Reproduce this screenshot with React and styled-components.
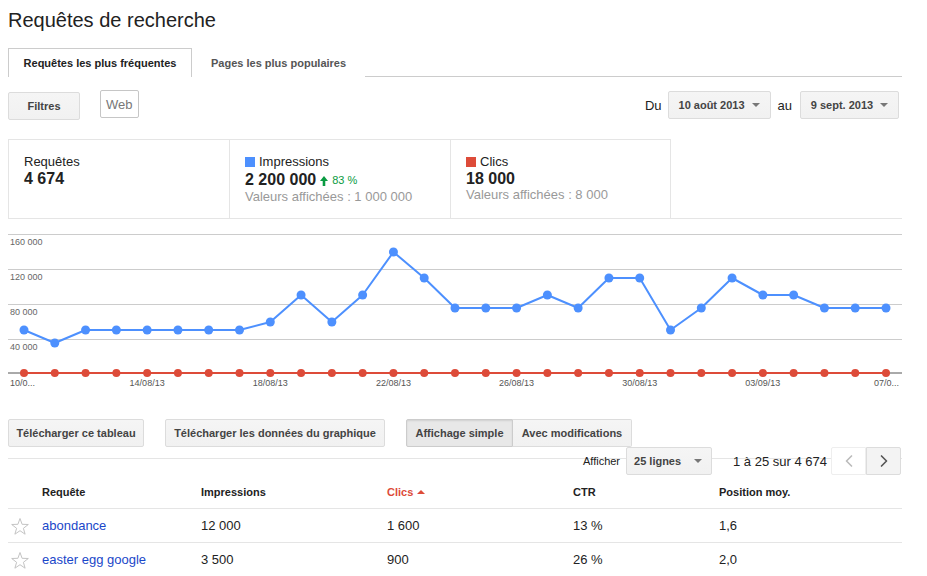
import React from "react";
import styled, { createGlobalStyle } from "styled-components";
import { ChevronLeft, ChevronRight } from "lucide-react";

const GlobalStyle = createGlobalStyle`
  body {
    margin: 0;
    background: #fff;
    font-family: "Liberation Sans", Arial, sans-serif;
    color: #222;
  }
`;

const BLUE = "#4d90fe";
const RED = "#dd4b39";

const blueYs = [
  329, 342, 329, 329, 329, 329, 329, 329, 321, 294, 321, 294, 251, 277, 307,
  307, 307, 294, 307, 277, 277, 329, 307, 277, 294, 294, 307, 307, 307,
];

const xLabels = [
  { i: 4, text: "14/08/13" },
  { i: 8, text: "18/08/13" },
  { i: 12, text: "22/08/13" },
  { i: 16, text: "26/08/13" },
  { i: 20, text: "30/08/13" },
  { i: 24, text: "03/09/13" },
];

const rows = [
  { q: "abondance", imp: "12 000", clics: "1 600", ctr: "13 %", pos: "1,6" },
  { q: "easter egg google", imp: "3 500", clics: "900", ctr: "26 %", pos: "2,0" },
];

const Page = styled.div`
  width: 894px;
  padding: 0 8px;
`;

const Title = styled.h1`
  margin: 8px 0 0;
  font-size: 20px;
  line-height: 24px;
  font-weight: normal;
  color: #222;
`;

const Tabs = styled.div`
  display: flex;
  margin-top: 16px;
  border-bottom: 1px solid #ccc;
  height: 28px;
`;

const Tab = styled.div`
  display: flex;
  align-items: center;
  justify-content: center;
  white-space: nowrap;
  padding: 0 ${(p) => (p.$active ? "0" : "18px")};
  width: ${(p) => (p.$active ? "184px" : "auto")};
  box-sizing: border-box;
  font-size: 11px;
  font-weight: bold;
  color: ${(p) => (p.$active ? "#222" : "#555")};
  background: #fff;
  border: 1px solid ${(p) => (p.$active ? "#ccc" : "transparent")};
  border-bottom: none;
  margin-bottom: -1px;
  height: 29px;
`;

const FilterRow = styled.div`
  display: flex;
  align-items: center;
  margin-top: 13px;
  height: 30px;
`;

const Button = styled.div`
  display: inline-flex;
  align-items: center;
  justify-content: center;
  height: 28px;
  box-sizing: border-box;
  padding: 0 ${(p) => p.$pad || "8px"};
  width: ${(p) => p.$w || "auto"};
  background: ${(p) => (p.$pressed ? "#e8e8e8" : "linear-gradient(#f5f5f5, #f1f1f1)")};
  border: 1px solid ${(p) => (p.$pressed ? "#ccc" : "#dcdcdc")};
  border-radius: 2px;
  box-shadow: ${(p) => (p.$pressed ? "inset 0 1px 2px rgba(0,0,0,0.1)" : "none")};
  font-size: 11px;
  font-weight: bold;
  color: #444;
  white-space: nowrap;
`;

const WebChip = styled.div`
  display: inline-flex;
  align-items: center;
  height: 28px;
  box-sizing: border-box;
  margin-left: 20px;
  margin-top: -2px;
  padding: 0 5px;
  border: 1px solid #c6c6c6;
  border-radius: 2px;
  font-size: 13px;
  color: #777;
`;

const Spacer = styled.div`
  flex: 1;
`;

const Label = styled.span`
  font-size: ${(p) => p.$size || "13px"};
  color: #222;
  margin: 0 ${(p) => p.$mr || "6px"} 0 ${(p) => p.$ml || "0"};
`;

const Caret = styled.span`
  display: inline-block;
  width: 0;
  height: 0;
  border-left: 4px solid transparent;
  border-right: 4px solid transparent;
  border-top: 4px solid #777;
  margin-left: ${(p) => p.$ml || "7px"};
`;

const Stats = styled.div`
  display: flex;
  margin-top: 19px;
  border-bottom: 1px solid #e5e5e5;
`;

const StatCell = styled.div`
  width: ${(p) => p.$w};
  box-sizing: border-box;
  height: 79px;
  padding: 14px 0 0 ${(p) => p.$pl || "15px"};
  border-top: 1px solid #e5e5e5;
  border-right: 1px solid #e5e5e5;
  border-left: ${(p) => (p.$first ? "1px solid #e5e5e5" : "none")};
`;

const StatName = styled.div`
  display: flex;
  align-items: center;
  font-size: 13px;
  line-height: 16px;
  color: #222;
`;

const Swatch = styled.span`
  width: 10px;
  height: 10px;
  background: ${(p) => p.$color};
  margin-right: 4px;
`;

const StatValue = styled.div`
  display: flex;
  align-items: center;
  font-size: 16px;
  line-height: 17px;
  font-weight: bold;
  color: #222;
`;

const Delta = styled.span`
  display: inline-flex;
  align-items: center;
  font-size: 11px;
  font-weight: normal;
  color: #0a9b42;
  margin-left: 4px;
  margin-top: 2px;
  gap: 4px;
`;

const StatSub = styled.div`
  font-size: 13px;
  line-height: 16px;
  color: #999;
`;

const ChartSvg = styled.svg`
  display: block;
  margin-top: 7px;
  font-family: "Liberation Sans", Arial, sans-serif;
`;

const Toolbar = styled.div`
  display: flex;
  align-items: center;
  gap: 21px;
  margin-top: 21px;
  padding-bottom: 11px;
  border-bottom: 1px solid #e5e5e5;
`;

const Segmented = styled.div`
  display: flex;
  & > div:first-child {
    border-radius: 2px 0 0 2px;
  }
  & > div:last-child {
    border-radius: 0 2px 2px 0;
    border-left: none;
  }
`;

const Pager = styled.div`
  display: flex;
  align-items: center;
  justify-content: flex-end;
  margin-top: -12px;
  height: 28px;
`;

const Select = styled(Button)`
  justify-content: space-between;
  width: 86px;
  padding: 0 9px 0 7px;
  margin-right: 21px;
`;

const PageInfo = styled.span`
  font-size: 13px;
  color: #222;
  margin-right: 4px;
`;

const NavButton = styled.div`
  display: flex;
  align-items: center;
  justify-content: center;
  width: 35px;
  height: 28px;
  box-sizing: border-box;
  border: 1px solid ${(p) => (p.$disabled ? "#eee" : "#dcdcdc")};
  background: ${(p) => (p.$disabled ? "#fff" : "#f3f3f3")};
  color: ${(p) => (p.$disabled ? "#bbb" : "#555")};
  border-radius: ${(p) => (p.$disabled ? "2px 0 0 2px" : "0 2px 2px 0")};
`;

const TableRow = styled.div`
  display: grid;
  grid-template-columns: 34px 159px 186px 186px 146px 1fr;
  align-items: center;
  height: 33px;
  border-bottom: 1px solid #e5e5e5;
`;

const HeadCell = styled.div`
  font-size: 11px;
  font-weight: bold;
  color: ${(p) => (p.$sorted ? RED : "#222")};
  display: flex;
  align-items: center;
  gap: 4px;
`;

const Cell = styled.div`
  font-size: 13px;
  color: #222;
`;

const QueryLink = styled.a`
  font-size: 13px;
  color: #1a47c9;
  text-decoration: none;
`;

const SortUp = styled.span`
  width: 0;
  height: 0;
  border-left: 4px solid transparent;
  border-right: 4px solid transparent;
  border-bottom: 4px solid ${RED};
`;

const Star = () => (
  <svg width="34" height="20" viewBox="0 0 34 20">
    <polygon
      points="12,2.5 14.1,8.3 20.3,8.5 15.4,12.3 17.1,18.2 12,14.7 6.9,18.2 8.6,12.3 3.7,8.5 9.9,8.3"
      fill="none"
      stroke="#c4c4c4"
      strokeWidth="1"
      strokeLinejoin="round"
    />
  </svg>
);

const UpArrow = () => (
  <svg width="8" height="10" viewBox="0 0 8 10">
    <path d="M4 0 L8 5 L5.3 5 L5.3 10 L2.7 10 L2.7 5 L0 5 Z" fill="#0a9b42" />
  </svg>
);

const Chart = () => {
  const px = (i) => 16 + i * 30.786;
  const blue = blueYs.map((y, i) => [px(i), y - 225]);
  const redY = 147;
  const grid = [8, 43, 78, 113];
  const yLabels = ["160 000", "120 000", "80 000", "40 000"];
  return (
    <ChartSvg width="894" height="172" viewBox="0 0 894 172">
      {grid.map((y) => (
        <line key={y} x1="0" x2="894" y1={y + 0.5} y2={y + 0.5} stroke="#ccc" strokeWidth="1" />
      ))}
      {yLabels.map((t, i) => (
        <text key={t} x="2" y={grid[i] + 11} fontSize="9" fill="#666">
          {t}
        </text>
      ))}
      <line x1="0" x2="894" y1={redY} y2={redY} stroke="#555" strokeWidth="1" />
      <polyline
        points={blue.map((p) => p.join(",")).join(" ")}
        fill="none"
        stroke={BLUE}
        strokeWidth="2"
        strokeLinejoin="round"
      />
      {blue.map(([x, y], i) => (
        <circle key={i} cx={x} cy={y} r="4.5" fill={BLUE} />
      ))}
      <line x1={px(0)} x2={px(28)} y1={redY} y2={redY} stroke={RED} strokeWidth="2" />
      {blue.map(([x], i) => (
        <circle key={i} cx={x} cy={redY} r="4" fill={RED} />
      ))}
      <text x="2" y="160" fontSize="9" fill="#555">
        10/0...
      </text>
      {xLabels.map((l) => (
        <text key={l.text} x={px(l.i)} y="160" fontSize="9" fill="#555" textAnchor="middle">
          {l.text}
        </text>
      ))}
      <text x="891" y="160" fontSize="9" fill="#555" textAnchor="end">
        07/0...
      </text>
    </ChartSvg>
  );
};

export default function App() {
  return (
    <Page>
      <GlobalStyle />
      <Title>Requêtes de recherche</Title>

      <Tabs>
        <Tab $active>Requêtes les plus fréquentes</Tab>
        <Tab>Pages les plus populaires</Tab>
      </Tabs>

      <FilterRow>
        <Button $w="72px" style={{ marginTop: 2 }}>Filtres</Button>
        <WebChip>Web</WebChip>
        <Spacer />
        <Label>Du</Label>
        <Button $w="103px" $pad="10px">
          10 août 2013
          <Caret />
        </Button>
        <Label $ml="7px" $mr="8px">au</Label>
        <Button $w="99px" $pad="10px">
          9 sept. 2013
          <Caret />
        </Button>
        <div style={{ width: 3 }} />
      </FilterRow>

      <Stats>
        <StatCell $w="222px" $pl="15px" $first>
          <StatName>Requêtes</StatName>
          <StatValue>4 674</StatValue>
        </StatCell>
        <StatCell $w="221px">
          <StatName>
            <Swatch $color={BLUE} />
            Impressions
          </StatName>
          <StatValue>
            2 200 000
            <Delta>
              <UpArrow />
              83 %
            </Delta>
          </StatValue>
          <StatSub>Valeurs affichées : 1 000 000</StatSub>
        </StatCell>
        <StatCell $w="220px">
          <StatName>
            <Swatch $color={RED} />
            Clics
          </StatName>
          <StatValue>18 000</StatValue>
          <StatSub>Valeurs affichées : 8 000</StatSub>
        </StatCell>
      </Stats>

      <Chart />

      <Toolbar>
        <Button $w="136px">Télécharger ce tableau</Button>
        <Button $w="220px">Télécharger les données du graphique</Button>
        <Segmented>
          <Button $w="107px" $pressed>Affichage simple</Button>
          <Button $w="119px">Avec modifications</Button>
        </Segmented>
      </Toolbar>

      <Pager>
        <Label $size="11px">Afficher</Label>
        <Select>
          25 lignes
          <Caret $ml="0" />
        </Select>
        <PageInfo>1 à 25 sur 4 674</PageInfo>
        <NavButton $disabled>
          <ChevronLeft size={20} strokeWidth={2} />
        </NavButton>
        <NavButton>
          <ChevronRight size={20} strokeWidth={2} />
        </NavButton>
        <div style={{ width: 1 }} />
      </Pager>

      <TableRow>
        <span />
        <HeadCell>Requête</HeadCell>
        <HeadCell>Impressions</HeadCell>
        <HeadCell $sorted>
          Clics
          <SortUp />
        </HeadCell>
        <HeadCell>CTR</HeadCell>
        <HeadCell>Position moy.</HeadCell>
      </TableRow>
      {rows.map((r) => (
        <TableRow key={r.q}>
          <Star />
          <Cell>
            <QueryLink href="#">{r.q}</QueryLink>
          </Cell>
          <Cell>{r.imp}</Cell>
          <Cell>{r.clics}</Cell>
          <Cell>{r.ctr}</Cell>
          <Cell>{r.pos}</Cell>
        </TableRow>
      ))}
    </Page>
  );
}
